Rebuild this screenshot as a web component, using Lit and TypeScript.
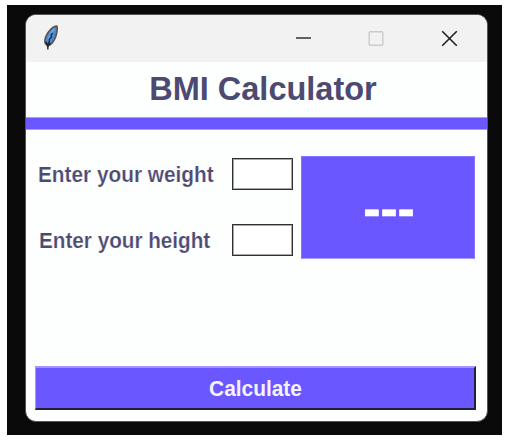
import { LitElement, html, css } from "lit";
import { customElement } from "lit/decorators.js";

@customElement("app-root")
export class AppRoot extends LitElement {
  static styles = css`
    :host {
      display: block;
      box-sizing: border-box;
      width: 507px;
      height: 445px;
      padding: 5px 5px 10px 7px;
      background: #fff;
      font-family: "Liberation Sans", Arial, sans-serif;
      font-weight: 700;
      color: #4d4a72;
    }
    * {
      box-sizing: border-box;
    }
    .desktop {
      height: 430px;
      padding: 9px 14px 13px 18px;
      background: #0a0a0a;
    }
    .window {
      display: flex;
      flex-direction: column;
      width: 463px;
      height: 408px;
      border: 1px solid #555;
      border-radius: 11px;
      overflow: hidden;
      background: #fdfefe;
    }
    .titlebar {
      display: flex;
      flex: none;
      align-items: center;
      height: 47px;
      padding: 0 29px 0 17px;
      background: #f2f2f2;
    }
    .feather {
      margin: 0 auto 2px 0;
    }
    .controls {
      display: flex;
      gap: 56px;
    }
    svg {
      display: block;
    }
    h1 {
      flex: none;
      margin: 0;
      height: 55px;
      padding: 9px 0 0 13px;
      font-size: 32.5px;
      line-height: 37px;
      text-align: center;
    }
    .rule {
      flex: none;
      height: 13px;
      background: #6a57ff;
      border: solid #a79cff;
      border-width: 1px 0;
    }
    .form {
      display: grid;
      grid-template-columns: 194px 61px 174px;
      grid-template-rows: 32px 32px;
      row-gap: 34px;
      padding: 28px 0 0 12px;
    }
    .label {
      font-size: 20.8px;
      line-height: 32px;
      white-space: nowrap;
      transform: translateY(0.7px) scaleY(1.07);
      -webkit-text-stroke: 0.2px #fdfefe;
      paint-order: fill stroke;
    }
    .height {
      padding-left: 1px;
      font-size: 20.7px;
    }
    .entry {
      width: 61px;
      height: 32px;
      padding: 0 4px;
      border: 1px solid #303030;
      border-radius: 0;
      box-shadow: inset 0 0 0 1px #a8a8a8;
      outline: none;
      background: #fff;
      font: inherit;
      font-size: 18px;
    }
    .result {
      grid-column: 3;
      grid-row: 1 / 3;
      width: 174px;
      height: 103px;
      margin: -2px 0 0 8px;
      padding: 21px 0 0 2px;
      border: 1px solid #8375ff;
      border-bottom-color: #a79cff;
      background: #6a57ff;
      color: #fff;
      font-size: 51.7px;
      line-height: 60px;
      text-align: center;
      -webkit-text-stroke: 0.6px #fff;
    }
    .calculate {
      flex: none;
      width: 441px;
      height: 44px;
      margin: auto 0 11px 9px;
      padding: 2px 0 0 1px;
      border: solid;
      border-width: 2px 2px 2px 1px;
      border-color: #a096ff #211f3a #211f3a #a096ff;
      border-radius: 0;
      background: #6a57ff;
      color: #f5f2ff;
      font: inherit;
      font-size: 20.9px;
      text-align: center;
    }
    .caption {
      display: block;
      transform: scaleY(1.07);
    }
  `;

  render() {
    return html`
      <div class="desktop">
        <div class="window">
          <div class="titlebar">
            <svg class="feather" width="16" height="26" viewBox="0 0 16 26">
              <path d="M13.8 1.2C9.5 1.2 4.5 7 2.6 12.3C1.4 16 2.2 19.3 4.6 20.3C8.5 20.6 12.3 14.6 13.6 8.5C14.2 5.2 14.5 2.5 13.8 1.2Z" fill="#4b8bd6" stroke="#5b5651" stroke-width="1.7"/>
              <path d="M11.4 4C8.5 6.7 6.3 11 5.4 15.5" fill="none" stroke="#67a5e6" stroke-width="2"/>
              <path d="M9.6 8L8 10.2L8.4 12L6.2 14.4L6.4 16.5L5 18.8L4.8 24.5" fill="none" stroke="#1c2d42" stroke-width="1.4"/>
              <path d="M2.8 17L4.8 21L7.2 17.8" fill="none" stroke="#292827" stroke-width="1.8"/>
            </svg>
            <div class="controls">
              <svg width="17" height="17" viewBox="0 0 17 17">
                <path d="M1 8H16" stroke="#333" stroke-width="1.5"/>
              </svg>
              <svg width="17" height="17" viewBox="0 0 17 17">
                <rect x="1.2" y="1.7" width="13.6" height="13.6" rx="1" fill="none" stroke="#cbcbcb" stroke-width="1.4"/>
              </svg>
              <svg width="17" height="17" viewBox="0 0 17 17">
                <path d="M1.2 1.2L15.8 15.8M15.8 1.2L1.2 15.8" stroke="#222" stroke-width="1.6"/>
              </svg>
            </div>
          </div>
          <h1>BMI Calculator</h1>
          <div class="rule"></div>
          <div class="form">
            <label class="label" for="weight">Enter your weight</label>
            <input class="entry" id="weight" />
            <div class="result">---</div>
            <label class="label height" for="height">Enter your height</label>
            <input class="entry" id="height" />
          </div>
          <button class="calculate"><span class="caption">Calculate</span></button>
        </div>
      </div>
    `;
  }
}
